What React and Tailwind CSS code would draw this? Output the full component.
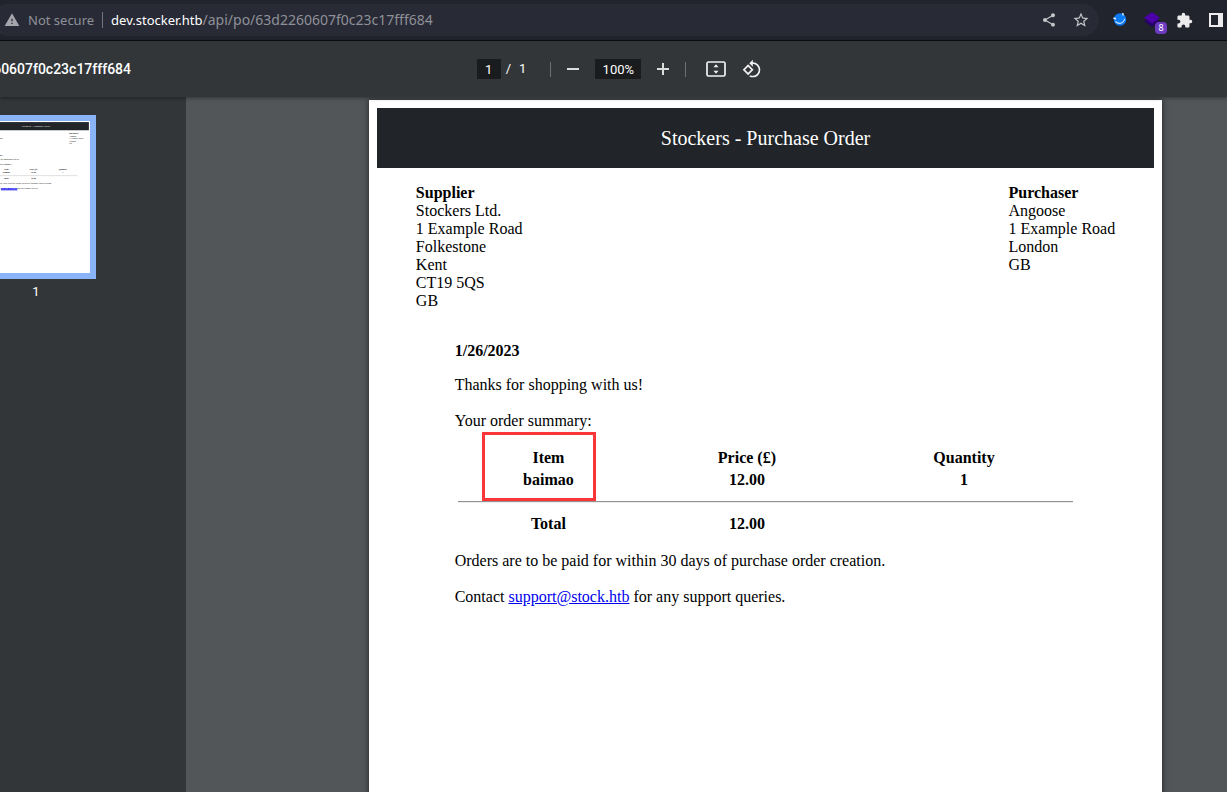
import React, { useState } from 'react';
import { MdWarning, MdShare, MdStarBorder, MdExtension, MdRotate90DegreesCcw } from 'react-icons/md';

const supplier = ['Stockers Ltd.', '1 Example Road', 'Folkestone', 'Kent', 'CT19 5QS', 'GB'];
const purchaser = ['Angoose', '1 Example Road', 'London', 'GB'];

const AddressBar = () => (
  <header className="flex h-[41px] shrink-0 items-center overflow-hidden border-b border-[#0c0d12] bg-[#21232d] font-['Noto_Sans',sans-serif] text-sm">
    <div className="-ml-2 flex h-8 flex-1 items-center rounded-full bg-[#282a36] pl-3 pr-0.5 text-[#8f9196]">
      <MdWarning className="h-4 w-4 shrink-0 text-[#a5a6ab]" />
      <span className="ml-2 whitespace-nowrap text-[13px]">Not secure</span>
      <span className="mx-2 h-4 w-px bg-[#75767d]" />
      <p className="flex-1 truncate">
        <span className="text-[13px] text-white">dev.stocker.htb</span>/api/po/63d2260607f0c23c17fff684
      </p>
      <button aria-label="Share" className="flex w-8 justify-center text-[#c4c5c8]">
        <MdShare className="h-4 w-4" />
      </button>
      <button aria-label="Bookmark" className="flex w-8 justify-center text-[#c4c5c8]">
        <MdStarBorder className="h-[18px] w-[18px]" />
      </button>
    </div>

    {/* Extensions */}
    <div className="-mr-[5px] flex shrink-0 items-center pl-[5px]">
      <button aria-label="Blue extension" className="flex w-8 justify-center">
        <svg viewBox="0 0 16 16" className="h-4 w-4">
          <circle cx="8" cy="7.500" r="6.200" fill="#0b7bf5" />
          <path d="M3.500 9.500c2 2 4.500 2.300 6.500 1.300s2.500-2.500 2.600-4" fill="none" stroke="#cfe4ff" strokeWidth="1.100" />
          <path d="M1.500 6l2.500 1M10.800 1l.4 2.500" stroke="#e8f3ff" strokeWidth="1.400" />
        </svg>
      </button>
      <button aria-label="Purple extension, 8 detected" className="relative flex w-8 justify-center">
        <svg viewBox="0 0 18 18" className="h-[18px] w-[18px]">
          <path d="M1 10l8-3 8 3-8 6z" fill="#240366" />
          <path d="M9 1l8 5.800-8 5.800-8-5.800z" fill="#4c00a8" />
        </svg>
        <span className="absolute left-[19px] top-[11px] flex h-3 w-3 items-center justify-center rounded-sm bg-[#6c3bbf] text-[9px] leading-3 text-white">8</span>
      </button>
      <button aria-label="Extensions" className="flex w-8 justify-center text-[#ececec]">
        <MdExtension className="h-[17px] w-[17px]" />
      </button>
      <button aria-label="Side panel" className="flex w-8 justify-center">
        <svg viewBox="0 0 14 14" className="h-3.5 w-3.5">
          <path d="M0 0h14v14H0zM2 2v10h7V2z" fill="#ececec" fillRule="evenodd" />
        </svg>
      </button>
    </div>
  </header>
);

const PdfToolbar = () => {
  const [page, setPage] = useState('1');
  const [zoom, setZoom] = useState(100);

  return (
    <div className="relative z-10 grid h-14 shrink-0 grid-cols-[1fr_auto_1fr] items-center bg-[#323639] font-[Roboto,sans-serif] text-[13px] text-white shadow-[0_1px_4px_rgba(0,0,0,0.4)]">
      <div className="flex w-[131px] justify-end overflow-hidden">
        <h1 className="text-sm font-medium">60607f0c23c17fff684</h1>
      </div>
      <div className="ml-3 flex items-center">
        <input
          aria-label="Page number"
          value={page}
          onChange={(e) => setPage(e.target.value)}
          className="h-5 w-6 bg-[#191b1c] text-center"
        />
        <span className="ml-[5px] whitespace-pre">/</span>
        <span className="ml-2">1</span>
        <span className="ml-6 mr-4 h-[15px] w-px bg-[#6d7073]" />
        <button aria-label="Zoom out" onClick={() => setZoom(zoom - 10)}>
          <svg viewBox="0 0 12 12" className="h-3 w-3">
            <path d="M0 5h12v2H0z" fill="#dcdddd" />
          </svg>
        </button>
        <input
          aria-label="Zoom level"
          value={`${zoom}%`}
          onChange={(e) => setZoom(parseInt(e.target.value, 10) || 0)}
          className="mx-4 h-5 w-[46px] bg-[#191b1c] text-center"
        />
        <button aria-label="Zoom in" onClick={() => setZoom(zoom + 10)}>
          <svg viewBox="0 0 12 12" className="h-3 w-3">
            <path d="M5 0h2v5h5v2H7v5H5V7H0V5h5z" fill="#dcdddd" />
          </svg>
        </button>
        <span className="ml-4 mr-5 h-[15px] w-px bg-[#6d7073]" />
        <button aria-label="Fit to page">
          <svg viewBox="0 0 20 16" className="h-4 w-5">
            <rect x="1" y="1" width="18" height="14" rx="1.500" fill="none" stroke="#f1f1f1" strokeWidth="1.700" />
            <path d="M10 3.200L12.500 6.200h-5zM10 12.800L12.500 9.800h-5z" fill="#f1f1f1" />
          </svg>
        </button>
        <button aria-label="Rotate counterclockwise" className="ml-4">
          <MdRotate90DegreesCcw className="h-5 w-5 text-[#f1f1f1]" />
        </button>
      </div>
    </div>
  );
};

// Miniature of the first page, drawn in page units
const Thumbnail = () => (
  <svg viewBox="0 0 794 1118" className="block h-[152px] w-[108px] bg-white font-['Liberation_Serif',serif]" fontSize="16">
    <rect x="8" y="8" width="778" height="60" fill="#212529" />
    <text x="397" y="45" fontSize="20" fill="#fff" textAnchor="middle">Stockers - Purchase Order</text>
    <text x="47" y="98" fontWeight="700">Supplier</text>
    {supplier.map((line, i) => <text key={line} x="47" y={116 + i * 18}>{line}</text>)}
    <text x="640" y="98" fontWeight="700">Purchaser</text>
    {purchaser.map((line, i) => <text key={line} x="640" y={116 + i * 18}>{line}</text>)}
    <text x="86" y="256" fontWeight="700">1/26/2023</text>
    <text x="86" y="290">Thanks for shopping with us!</text>
    <text x="86" y="326">Your order summary:</text>
    <g fontWeight="700" textAnchor="middle">
      <text x="179" y="363">Item</text>
      <text x="378" y="363">Price (£)</text>
      <text x="595" y="363">Quantity</text>
      <text x="179" y="385">baimao</text>
      <text x="378" y="385">12.00</text>
      <text x="595" y="385">1</text>
      <text x="179" y="429">Total</text>
      <text x="378" y="429">12.00</text>
    </g>
    <text x="86" y="466">Orders are to be paid for within 30 days of purchase order creation.</text>
    <text x="86" y="502">
      Contact <tspan fill="#0000ee" stroke="#0000ee" strokeWidth="1">support@stock.htb</tspan> for any support queries.
    </text>
    <path d="M139 506h121" stroke="#0000ee" strokeWidth="7" />
    <path d="M89 402h616" stroke="#ddd" strokeWidth="7" />
  </svg>
);

const Address = ({ title, lines }) => (
  <address className="not-italic">
    <strong className="block">{title}</strong>
    {lines.map((line) => (
      <span key={line} className="block">{line}</span>
    ))}
  </address>
);

const PurchaseOrder = () => (
  <article className="min-h-[1122px] w-[793px] max-w-full shrink-0 bg-white px-2 pt-2 font-['Liberation_Serif',serif] text-base leading-[18px] text-black shadow-[0_0_6px_rgba(0,0,0,0.6)]">
    <h2 className="flex h-[60px] items-center justify-center bg-[#212529] text-xl text-white">Stockers - Purchase Order</h2>
    <div className="flex justify-between px-[5%] pt-4">
      <Address title="Supplier" lines={supplier} />
      <Address title="Purchaser" lines={purchaser} />
    </div>

    <div className="px-[10%] pt-8">
      <p className="mb-4 font-bold">1/26/2023</p>
      <p className="mb-[18px]">Thanks for shopping with us!</p>
      <p className="mb-4">Your order summary:</p>
      <div className="relative mb-4">
        <table className="w-full border-separate border-spacing-[2px] text-center font-bold">
          <thead>
            <tr>
              <th className="p-px">Item</th>
              <th className="p-px">Price (£)</th>
              <th className="p-px">Quantity</th>
            </tr>
          </thead>
          <tbody>
            <tr>
              <td className="p-px">baimao</td>
              <td className="p-px">12.00</td>
              <td className="p-px">1</td>
            </tr>
            <tr>
              <td colSpan={3} className="p-px">
                <hr className="my-2 border-t border-b border-t-[#929292] border-b-[#ececec]" />
              </td>
            </tr>
            <tr>
              <td className="p-px">Total</td>
              <td className="p-px">12.00</td>
              <td className="p-px" />
            </tr>
          </tbody>
        </table>
        {/* Highlight round the item column */}
        <div className="pointer-events-none absolute -top-3.5 left-[27px] h-[69px] w-[114px] border-3 border-[#fa3639]" />
      </div>
      <p className="mb-[18px]">Orders are to be paid for within 30 days of purchase order creation.</p>
      <p>
        Contact <a href="mailto:support@stock.htb" className="text-[#0000ee] underline">support@stock.htb</a> for any support queries.
      </p>
    </div>
  </article>
);

const App = () => (
  <div className="flex h-screen flex-col overflow-hidden">
    <AddressBar />
    <PdfToolbar />
    <div className="flex min-h-0 flex-1">
      <aside className="flex w-[186px] shrink-0 flex-col items-start overflow-hidden bg-[#323639] pt-[18px]">
        <button aria-label="Go to page 1" className="-ml-6 border-6 border-[#8ab4f8]">
          <Thumbnail />
        </button>
        <span className="-ml-6 mt-1 w-[120px] text-center font-[Roboto,sans-serif] text-[13px] leading-[18px] text-white">1</span>
      </aside>
      <main className="flex flex-1 items-start justify-end overflow-hidden bg-[#525659] pr-[65px] pt-[3px]">
        <PurchaseOrder />
      </main>
    </div>
  </div>
);

export default App;
